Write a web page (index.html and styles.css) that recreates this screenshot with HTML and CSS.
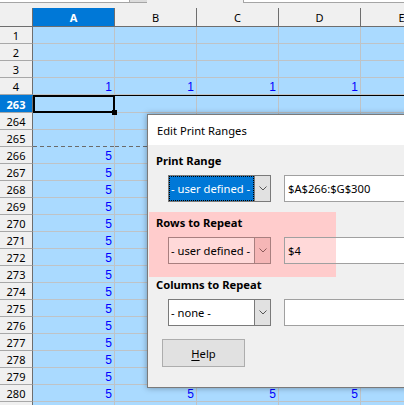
FILE: index.html
```html
<!DOCTYPE html>
<html>
<head>
<meta charset="utf-8">
<link rel="stylesheet" href="styles.css">
</head>
<body>
<div class="topbar">
  <div class="namebox"></div>
  <div class="namebtn"></div>
  <div class="formula"></div>
</div>
<div class="sheet">
  <div class="row hdr"><div class="corner"></div><div class="ch sel">A</div><div class="ch">B</div><div class="ch">C</div><div class="ch">D</div><div class="ch">E</div></div>
  <div class="row"><div class="rh">1</div><div class="c"></div><div class="c"></div><div class="c"></div><div class="c"></div><div class="c"></div></div>
  <div class="row"><div class="rh">2</div><div class="c"></div><div class="c"></div><div class="c"></div><div class="c"></div><div class="c"></div></div>
  <div class="row"><div class="rh">3</div><div class="c"></div><div class="c"></div><div class="c"></div><div class="c"></div><div class="c"></div></div>
  <div class="row"><div class="rh">4</div><div class="c">1</div><div class="c">1</div><div class="c">1</div><div class="c">1</div><div class="c">1</div></div>
  <div class="freeze"><div class="freeze-h"></div><div class="freeze-l"></div></div>
  <div class="row"><div class="rh sel">263</div><div class="c"></div><div class="c"></div><div class="c"></div><div class="c"></div><div class="c"></div></div>
  <div class="row"><div class="rh">264</div><div class="c"></div><div class="c"></div><div class="c"></div><div class="c"></div><div class="c"></div></div>
  <div class="row"><div class="rh">265</div><div class="c pb"></div><div class="c pb"></div><div class="c pb"></div><div class="c pb"></div><div class="c pb"></div></div>
  <div class="row"><div class="rh">266</div><div class="c">5</div><div class="c">5</div><div class="c">5</div><div class="c">5</div><div class="c">5</div></div>
  <div class="row"><div class="rh">267</div><div class="c">5</div><div class="c">5</div><div class="c">5</div><div class="c">5</div><div class="c">5</div></div>
  <div class="row"><div class="rh">268</div><div class="c">5</div><div class="c">5</div><div class="c">5</div><div class="c">5</div><div class="c">5</div></div>
  <div class="row"><div class="rh">269</div><div class="c">5</div><div class="c">5</div><div class="c">5</div><div class="c">5</div><div class="c">5</div></div>
  <div class="row"><div class="rh">270</div><div class="c">5</div><div class="c">5</div><div class="c">5</div><div class="c">5</div><div class="c">5</div></div>
  <div class="row"><div class="rh">271</div><div class="c">5</div><div class="c">5</div><div class="c">5</div><div class="c">5</div><div class="c">5</div></div>
  <div class="row"><div class="rh">272</div><div class="c">5</div><div class="c">5</div><div class="c">5</div><div class="c">5</div><div class="c">5</div></div>
  <div class="row"><div class="rh">273</div><div class="c">5</div><div class="c">5</div><div class="c">5</div><div class="c">5</div><div class="c">5</div></div>
  <div class="row"><div class="rh">274</div><div class="c">5</div><div class="c">5</div><div class="c">5</div><div class="c">5</div><div class="c">5</div></div>
  <div class="row"><div class="rh">275</div><div class="c">5</div><div class="c">5</div><div class="c">5</div><div class="c">5</div><div class="c">5</div></div>
  <div class="row"><div class="rh">276</div><div class="c">5</div><div class="c">5</div><div class="c">5</div><div class="c">5</div><div class="c">5</div></div>
  <div class="row"><div class="rh">277</div><div class="c">5</div><div class="c">5</div><div class="c">5</div><div class="c">5</div><div class="c">5</div></div>
  <div class="row"><div class="rh">278</div><div class="c">5</div><div class="c">5</div><div class="c">5</div><div class="c">5</div><div class="c">5</div></div>
  <div class="row"><div class="rh">279</div><div class="c">5</div><div class="c">5</div><div class="c">5</div><div class="c">5</div><div class="c">5</div></div>
  <div class="row"><div class="rh">280</div><div class="c">5</div><div class="c">5</div><div class="c">5</div><div class="c">5</div><div class="c">5</div></div>
  <div class="row"><div class="rh">281</div><div class="c">5</div><div class="c">5</div><div class="c">5</div><div class="c">5</div><div class="c">5</div></div>
  <div class="cursor"></div>
  <div class="handle"></div>
</div>

<div class="dialog">
  <div class="title">Edit Print Ranges</div>
  <div class="dbody">
    <div class="section">
      <div class="label">Print Range</div>
      <div class="fields">
        <div class="combo focus">
          <div class="field"><span>- user defined -</span></div>
          <div class="btn"><svg width="8" height="5" viewBox="0 0 8 5"><polyline points="0.5,0.5 4,4 7.5,0.5" fill="none" stroke="#555" stroke-width="1"/></svg></div>
        </div>
        <div class="input">$A$266:$G$300</div>
      </div>
    </div>
    <div class="section hl">
      <div class="label">Rows to Repeat</div>
      <div class="fields">
        <div class="combo">
          <div class="field"><span>- user defined -</span></div>
          <div class="btn"><svg width="8" height="5" viewBox="0 0 8 5"><polyline points="0.5,0.5 4,4 7.5,0.5" fill="none" stroke="#8a5a5a" stroke-width="1"/></svg></div>
        </div>
        <div class="input">$4</div>
      </div>
    </div>
    <div class="section">
      <div class="label">Columns to Repeat</div>
      <div class="fields">
        <div class="combo">
          <div class="field"><span>- none -</span></div>
          <div class="btn"><svg width="8" height="5" viewBox="0 0 8 5"><polyline points="0.5,0.5 4,4 7.5,0.5" fill="none" stroke="#555" stroke-width="1"/></svg></div>
        </div>
        <div class="input"></div>
      </div>
    </div>
    <div class="help"><span><u>H</u>elp</span></div>
  </div>
</div>
</body>
</html>
```

FILE: styles.css
```css
* { box-sizing: border-box; }
html, body { margin: 0; padding: 0; }
body {
  width: 404px;
  height: 405px;
  overflow: hidden;
  position: relative;
  background: #fff;
  font-family: "Noto Sans", sans-serif;
}

/* top formula bar remnants */
.topbar {
  height: 8px;
  background: #f0f0f0;
  display: flex;
  align-items: flex-start;
}
.namebox {
  width: 130px;
  height: 3px;
  background: #fff;
  border-right: 1px solid #a5a5a5;
  border-bottom: 1px solid #a5a5a5;
}
.namebtn {
  width: 17px;
  height: 3px;
  background: #dcdcdc;
  border-bottom: 1px solid #a5a5a5;
}
.formula {
  margin-left: 96px;
  flex: 1;
  height: 3px;
  background: #fff;
  border-left: 1px solid #a5a5a5;
  border-bottom: 1px solid #a5a5a5;
}

/* sheet grid */
.sheet {
  position: relative;
  overflow: hidden;
  height: 397px;
}
.row {
  display: grid;
  grid-template-columns: 33px repeat(5, 82px);
  height: 17px;
}
.row.hdr { height: 19px; }

.corner, .ch, .rh {
  background: #f0f0f0;
  font: 11px "Noto Sans", sans-serif;
  color: #000;
  display: flex;
  align-items: center;
  justify-content: center;
}
.corner {
  border-right: 1px solid #6e6e6e;
  border-bottom: 1px solid #6e6e6e;
}
.ch {
  border-right: 1px solid #6e6e6e;
  border-bottom: 1px solid #6e6e6e;
}
.rh {
  border-right: 1px solid #6e6e6e;
  border-bottom: 1px solid #a8a8a8;
}
.sel {
  background: #0078d7;
  color: #fff;
  font-weight: bold;
}
.c {
  background: #aadaff;
  border-right: 1px solid #bfc3c6;
  border-bottom: 1px solid #bfc3c6;
  font: 12px/13px "Liberation Sans", Arial, sans-serif;
  color: #0000ff;
  display: flex;
  align-items: flex-end;
  justify-content: flex-end;
  padding-right: 2px;
}
.c.pb {
  border-bottom-color: transparent;
  background-color: #aadaff;
  background-image: linear-gradient(to right, #6b6b6b 0 4px, transparent 4px 7px);
  background-size: 7px 1px;
  background-repeat: repeat-x;
  background-origin: border-box;
  background-position: left bottom;
}

.freeze {
  display: grid;
  grid-template-columns: 33px 1fr;
  height: 1px;
}
.freeze-h { background: #0078d7; }
.freeze-l { background: #000; }

/* cell cursor overlay */
.cursor {
  position: absolute;
  left: 33px;
  top: 87px;
  width: 82px;
  height: 18px;
  border: 2px solid #000;
}
.handle {
  position: absolute;
  left: 112px;
  top: 102px;
  width: 5px;
  height: 5px;
  background: #000;
}

/* dialog */
.dialog {
  position: absolute;
  z-index: 1;
  left: 147px;
  top: 114px;
  width: 300px;
  height: 274px;
  border: 1px solid #7a7a7a;
  background: #f0f0f0;
  box-shadow: 0 0 6px rgba(0, 0, 0, 0.35);
  font: 11.2px "Noto Sans", sans-serif;
  color: #000;
}
.title {
  height: 30px;
  background: #fff;
  padding-left: 9px;
  display: flex;
  align-items: center;
}
.dbody {
  padding: 8px 0 0 8px;
}
.section {
  display: flex;
  flex-direction: column;
  gap: 6px;
  margin-bottom: 13px;
  position: relative;
}
/* pink annotation highlight behind the "Rows to Repeat" group */
.section.hl::before {
  content: "";
  position: absolute;
  z-index: -1;
  left: -7px;
  top: -3px;
  width: 187px;
  height: 65px;
  background: #ffcccc;
}
.label {
  font-weight: bold;
  height: 16px;
  line-height: 16px;
}
.fields {
  display: flex;
  gap: 13px;
  padding-left: 12px;
}
.combo {
  width: 103px;
  height: 27px;
  border: 1px solid #7a7a7a;
  background: #fff;
  display: flex;
}
.field {
  flex: 1;
  display: flex;
  align-items: center;
  padding-left: 2px;
  white-space: nowrap;
}
.combo.focus .field {
  background: #0078d7;
  color: #fff;
  border: 1px dotted #000;
  padding-left: 1px;
}
.btn {
  width: 16px;
  border-left: 1px solid #7a7a7a;
  background: #e1e1e1;
  display: flex;
  align-items: center;
  justify-content: center;
}
.btn svg { display: block; }
.input {
  flex: 1;
  height: 27px;
  border: 1px solid #a0a0a0;
  background: #fff;
  padding-left: 3px;
  display: flex;
  align-items: center;
  white-space: nowrap;
}
.hl .combo { background: #ffd9d9; border-color: #a87f7f; }
.hl .btn { background: #f5b6b6; border-left-color: #a87f7f; }
.hl .input {
  border-color: #a0a0a0;
  background: linear-gradient(to right, #ffd9d9 0 51px, #fff 51px);
}
.help {
  margin-top: 6px;
  margin-left: 6px;
  width: 83px;
  height: 28px;
  border: 1px solid #adadad;
  background: #e1e1e1;
  display: flex;
  align-items: center;
  justify-content: center;
}
.help u { text-decoration-thickness: 1px; text-underline-offset: 2px; }
```
